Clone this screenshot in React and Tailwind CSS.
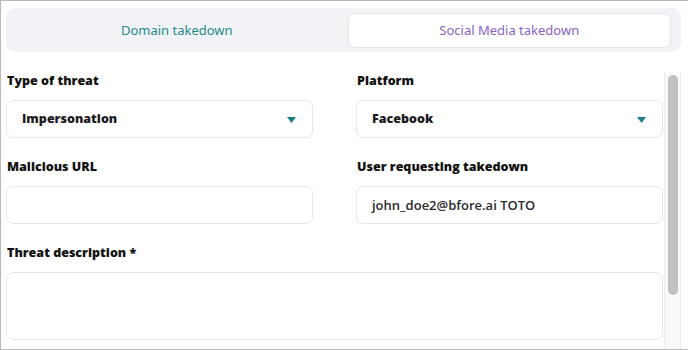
import { useState } from "react";

function Caret() {
    return (
        <svg width="9" height="6" viewBox="0 0 9 6" className="shrink-0">
            <path d="M0 0 H9 L4.5 6 Z" fill="#1d7f80" />
        </svg>
    );
}

function Field({ label, children }) {
    return (
        <div className="flex flex-col">
            <label className="h-[20px] flex items-center text-[12.5px] font-extrabold text-[#111] pl-[1px] pt-[3px]">
                {label}
            </label>
            <div className="mt-[10px]">{children}</div>
        </div>
    );
}

function SelectBox({ value }) {
    return (
        <div className="h-[38px] flex items-center justify-between rounded-[7px] border border-[#e6e7ec] bg-white pl-[15px] pr-[16px] pt-[1px]">
            <span className="text-[12.5px] font-extrabold text-[#1b1b1f]">{value}</span>
            <Caret />
        </div>
    );
}

function TextBox({ value, tall }) {
    return (
        <div
            className={
                "flex items-center rounded-[7px] border border-[#e6e7ec] bg-white pl-[15px] pt-[1px] " +
                (tall ? "h-[68px]" : "h-[38px]")
            }
        >
            {value && (
                <span className="text-[13px] font-semibold text-[#2a2a2e]">{value}</span>
            )}
        </div>
    );
}

export default function App() {
    const [tab, setTab] = useState("social");

    return (
        <div
            className="w-[688px] h-[350px] overflow-hidden bg-white border-t border-l border-b border-[#b9b9b9] flex flex-col"
            style={{ fontFamily: "'Open Sans', 'Noto Sans', sans-serif" }}
        >
            {/* TABS */}
            <div className="mt-[7px] ml-[5px] mr-[7px] h-[44px] shrink-0 rounded-[9px] bg-[#f2f3f7] flex gap-[10px] px-[10px] pt-[5px] pb-[4px]">
                <button
                    onClick={() => setTab("domain")}
                    className={
                        "flex-1 rounded-[7px] text-[13px] text-[#26898a] " +
                        (tab === "domain" ? "bg-white border border-[#e4e5ea]" : "")
                    }
                    style={{ fontFamily: "'Noto Sans', sans-serif" }}
                >
                    Domain takedown
                </button>
                <button
                    onClick={() => setTab("social")}
                    className={
                        "flex-1 rounded-[7px] text-[13px] text-[#8c5fc9] " +
                        (tab === "social" ? "bg-white border border-[#e4e5ea]" : "")
                    }
                    style={{ fontFamily: "'Noto Sans', sans-serif" }}
                >
                    Social Media takedown
                </button>
            </div>

            {/* FORM */}
            <div className="flex flex-1 mt-[18px] min-h-0">
                <div className="flex-1 pl-[5px] pr-[1px] overflow-hidden">
                    <div className="grid grid-cols-2 gap-x-[43px] gap-y-[18px]">
                        <Field label="Type of threat">
                            <SelectBox value="Impersonation" />
                        </Field>
                        <Field label="Platform">
                            <SelectBox value="Facebook" />
                        </Field>
                        <Field label="Malicious URL">
                            <TextBox />
                        </Field>
                        <Field label="User requesting takedown">
                            <TextBox value="john_doe2@bfore.ai TOTO" />
                        </Field>
                        <div className="col-span-2">
                            <Field label="Threat description *">
                                <TextBox tall />
                            </Field>
                        </div>
                    </div>
                </div>

                {/* scrollbar */}
                <div className="w-[17px] mr-[7px] mt-[2px] bg-[#f9f9f9] border-x border-[#ececec] flex justify-center pt-[3px]">
                    <div className="w-[10px] h-[220px] rounded-full bg-[#c1c1c1]" />
                </div>
            </div>
        </div>
    );
}
